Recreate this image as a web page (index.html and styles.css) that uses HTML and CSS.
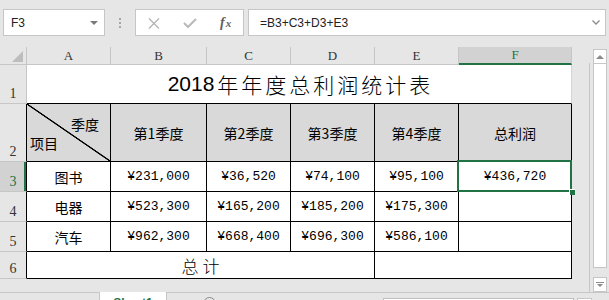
FILE: index.html
```html
<!DOCTYPE html>
<html lang="zh">
<head>
<meta charset="utf-8">
<title>2018年年度总利润统计表</title>
<link rel="stylesheet" href="styles.css">
</head>
<body>
<div class="app">
  <div class="formula-bar">
    <div class="name-box"><span>F3</span><span class="caret"></span></div>
    <div class="grip"><i></i><i></i><i></i></div>
    <div class="fx-buttons">
      <svg class="ico-cancel" width="12" height="11" viewBox="0 0 12 11"><path d="M1 0.5 L11 10.5 M11 0.5 L1 10.5" stroke="#b4b4b4" stroke-width="1.3" fill="none"/></svg>
      <svg class="ico-enter" width="14" height="10" viewBox="0 0 14 10"><path d="M1 5 L5 9 L13 1" stroke="#b8b8b8" stroke-width="2" fill="none"/></svg>
      <span class="fx">f<span class="fx-x">x</span></span>
    </div>
    <div class="formula-input">
      <span>=B3+C3+D3+E3</span>
      <svg class="chev" width="8" height="5" viewBox="0 0 8 5"><path d="M0.5 0.5 L4 4 L7.5 0.5" stroke="#8c8c8c" stroke-width="1.4" fill="none"/></svg>
    </div>
  </div>

  <div class="workspace">
    <div class="sheet">
      <div class="grid">
        <!-- column headers -->
        <div class="hd corner"><span class="tri"></span></div>
        <div class="hd col">A</div>
        <div class="hd col">B</div>
        <div class="hd col">C</div>
        <div class="hd col">D</div>
        <div class="hd col">E</div>
        <div class="hd col sel">F</div>

        <!-- row 1 -->
        <div class="hd row">1</div>
        <div class="title"><span class="yr">2018</span><span class="zh">年年度总利润统计表</span></div>

        <!-- row 2 -->
        <div class="hd row dark">2</div>
        <div class="cell head diag"><span class="q">季度</span><span class="i">项目</span></div>
        <div class="cell head">第1季度</div>
        <div class="cell head">第2季度</div>
        <div class="cell head">第3季度</div>
        <div class="cell head">第4季度</div>
        <div class="cell head">总利润</div>

        <!-- row 3 -->
        <div class="hd row dark sel">3</div>
        <div class="cell">图书</div>
        <div class="cell num">¥231,000</div>
        <div class="cell num">¥36,520</div>
        <div class="cell num">¥74,100</div>
        <div class="cell num">¥95,100</div>
        <div class="cell num active">¥436,720<span class="sel-box"></span><span class="handle"></span></div>

        <!-- row 4 -->
        <div class="hd row dark">4</div>
        <div class="cell">电器</div>
        <div class="cell num">¥523,300</div>
        <div class="cell num">¥165,200</div>
        <div class="cell num">¥185,200</div>
        <div class="cell num">¥175,300</div>
        <div class="cell"></div>

        <!-- row 5 -->
        <div class="hd row dark">5</div>
        <div class="cell">汽车</div>
        <div class="cell num">¥962,300</div>
        <div class="cell num">¥668,400</div>
        <div class="cell num">¥696,300</div>
        <div class="cell num">¥586,100</div>
        <div class="cell"></div>

        <!-- row 6 -->
        <div class="hd row dark">6</div>
        <div class="cell total">总计</div>
        <div class="cell span2"></div>
      </div>
      <div class="edge"></div>
    </div>

    <div class="vscroll">
      <div class="vbtn"><span class="up"></span></div>
      <div class="vthumb"></div>
      <div class="vspace"></div>
      <div class="vbtn"><span class="down"></span></div>
    </div>
  </div>

  <div class="tabs">
    <div class="sheet-tab">Sheet1</div>
    <div class="add"></div>
    <div class="hscroll"></div>
    <div class="hbtn"></div>
  </div>
</div>
</body>
</html>
```

FILE: styles.css
```css
* { box-sizing: border-box; }

html, body {
  margin: 0;
  padding: 0;
}

body {
  width: 609px;
  height: 300px;
  overflow: hidden;
  background: #e6e6e6;
  font-family: "Liberation Sans", Arial, sans-serif;
  color: #000;
}

/* ---------- formula bar ---------- */
.formula-bar {
  display: flex;
  height: 47px;
  padding: 9px 3px 11px 3px;
}

.name-box {
  width: 102px;
  background: #fff;
  border: 1px solid #c6c6c6;
  display: flex;
  align-items: center;
  padding: 0 6px 0 7px;
  font-size: 12px;
  color: #222;
}

.name-box .caret {
  margin-left: auto;
  width: 0;
  height: 0;
  border-left: 4px solid transparent;
  border-right: 4px solid transparent;
  border-top: 4px solid #7a7a7a;
}

.grip {
  width: 30px;
  display: flex;
  flex-direction: column;
  align-items: center;
  justify-content: center;
  gap: 2px;
}

.grip i {
  display: block;
  width: 2px;
  height: 2px;
  background: #a6a6a6;
}

.fx-buttons {
  width: 109px;
  background: #fff;
  border: 1px solid #c6c6c6;
  display: flex;
  align-items: center;
  padding-left: 12px;
}

.ico-cancel { margin-top: 1px; }
.ico-enter { margin-left: 23px; margin-top: 1px; }

.fx {
  margin-left: 23px;
  font-family: "Liberation Serif", serif;
  font-style: italic;
  font-weight: bold;
  font-size: 14px;
  color: #5f5f5f;
}

.fx-x {
  font-size: 11px;
  margin-left: 1px;
}

.formula-input {
  margin-left: 4px;
  flex: 1;
  background: #fff;
  border: 1px solid #c6c6c6;
  display: flex;
  align-items: center;
  padding: 0 5px 0 11px;
  font-size: 12px;
  color: #222;
}

.formula-input .chev { margin-left: auto; }

/* ---------- worksheet ---------- */
.workspace {
  display: flex;
  height: 245px;
}

.sheet {
  display: flex;
  width: 590px;
}

.grid {
  display: grid;
  width: 572px;
  grid-template-columns: 27px 84px 96px 84px 84px 84px 113px;
  grid-template-rows: 18px 39px 58px 30px 30px 30px 27px;
  align-self: flex-start;
}

.edge {
  width: 18px;
  margin-top: 16px;
  border-right: 1px solid #c6c6c6;
}

/* headers */
.hd {
  background: #e6e6e6;
  border-right: 1px solid #c6c6c6;
  border-bottom: 1px solid #c6c6c6;
  display: flex;
  justify-content: center;
  align-items: center;
  font-family: "Liberation Serif", serif;
  font-size: 13px;
  color: #333;
}

.corner {
  justify-content: flex-end;
  align-items: flex-end;
  padding: 0 3px 2px 0;
}

.corner .tri {
  width: 0;
  height: 0;
  border-left: 11px solid transparent;
  border-bottom: 11px solid #bdbdbd;
}

.col.sel {
  background: #d2d2d2;
  color: #217346;
  border-bottom: 2px solid #217346;
}

.row {
  align-items: flex-end;
  padding-bottom: 1px;
  font-size: 14px;
}

.row.dark { border-right-color: #000; }

.row.sel {
  background: #d2d2d2;
  color: #217346;
  box-shadow: inset -2px 0 0 #217346;
}

/* title row */
.title {
  grid-column: 2 / span 6;
  background: #fff;
  border-bottom: 1px solid #000;
  border-right: 1px solid #d4d4d4;
  display: flex;
  justify-content: center;
  align-items: center;
  font-size: 21px;
}

.title .yr {
  font-family: "Liberation Sans", Arial, sans-serif;
  margin-right: 3px;
}

.title .zh {
  font-family: "Noto Sans CJK SC", sans-serif;
  font-weight: 300;
  letter-spacing: 3px;
  margin-right: -3px;
}

/* data cells */
.cell {
  background: #fff;
  border-right: 1px solid #000;
  border-bottom: 1px solid #000;
  display: flex;
  justify-content: center;
  align-items: center;
  font-family: "Noto Sans CJK SC", sans-serif;
  font-size: 14px;
}

.cell.head { background-color: #d9d9d9; }

.cell.num {
  font-family: "Liberation Mono", monospace;
  font-size: 13px;
}

/* A2: split header with a corner-to-corner rule */
.cell.diag {
  flex-direction: column;
  justify-content: flex-start;
  align-items: stretch;
  padding: 13px 11px 0 3px;
  background-image: linear-gradient(to top right,
    transparent calc(50% - 1px),
    #000 calc(50% - 0.4px),
    #000 calc(50% + 0.4px),
    transparent calc(50% + 1px));
}

.diag .q {
  align-self: flex-end;
  line-height: 14px;
}

.diag .i {
  align-self: flex-start;
  line-height: 14px;
  margin-top: 5px;
}

.active { position: relative; }

.active .sel-box {
  position: absolute;
  left: -2px;
  top: -2px;
  right: -1px;
  bottom: -1px;
  border: 2px solid #217346;
}

.active .handle {
  position: absolute;
  right: -4px;
  bottom: -4px;
  width: 6px;
  height: 6px;
  background: #217346;
  border-top: 1px solid #fff;
  border-left: 1px solid #fff;
}

.total {
  grid-column: 2 / span 4;
  font-size: 17px;
  font-weight: 300;
  letter-spacing: 4px;
  padding-left: 4px;
}

.span2 { grid-column: 6 / span 2; }

/* vertical scroll bar */
.vscroll {
  width: 19px;
  display: flex;
  flex-direction: column;
  padding: 2px 2px 0 3px;
}

.vbtn {
  height: 15px;
  width: 14px;
  background: #fff;
  border: 1px solid #c6c6c6;
  display: flex;
  align-items: center;
  justify-content: center;
}

.vbtn .up {
  width: 0;
  height: 0;
  border-left: 4px solid transparent;
  border-right: 4px solid transparent;
  border-bottom: 4px solid #8a8a8a;
}

.vbtn .down {
  width: 8px;
  height: 5px;
  border-top: 1px solid #8a8a8a;
}

.vbtn .down::after {
  content: "";
  display: block;
  margin: 1px auto 0;
  width: 0;
  height: 0;
  border-left: 3px solid transparent;
  border-right: 3px solid transparent;
  border-top: 3px solid #8a8a8a;
}

.vthumb {
  height: 204px;
  width: 14px;
  background: #fff;
  border: 1px solid #c6c6c6;
  border-top: none;
}

.vspace { flex: 1; }

/* sheet tabs */
.tabs {
  height: 30px;
  border-top: 1px solid #c6c6c6;
  display: flex;
  align-items: flex-start;
}

.sheet-tab {
  margin-left: 99px;
  margin-top: -1px;
  width: 68px;
  height: 24px;
  background: #fff;
  border-left: 1px solid #c6c6c6;
  border-right: 1px solid #c6c6c6;
  color: #217346;
  font-size: 12px;
  font-weight: bold;
  padding-top: 4px;
  text-align: center;
}

.add {
  margin-left: 36px;
  margin-top: 4px;
  width: 13px;
  height: 13px;
  border: 1px solid #8a8a8a;
  border-radius: 50%;
}

.hscroll {
  margin-left: 167px;
  margin-top: 5px;
  width: 191px;
  height: 14px;
  background: #fff;
  border: 1px solid #bdbdbd;
}

.hbtn {
  margin-left: 3px;
  margin-top: 5px;
  width: 15px;
  height: 14px;
  background: #fff;
  border: 1px solid #c6c6c6;
}
```
